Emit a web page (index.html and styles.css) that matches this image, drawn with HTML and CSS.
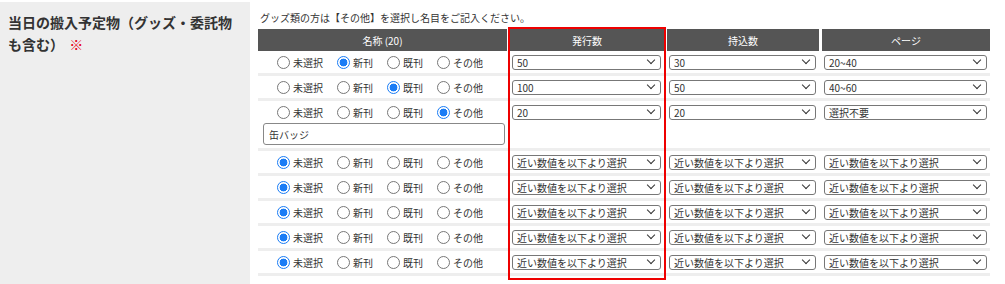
FILE: index.html
```html
<!DOCTYPE html>
<html lang="ja">
<head>
<meta charset="utf-8">
<title>当日の搬入予定物</title>
<link rel="stylesheet" href="styles.css">
</head>
<body>
<div class="form-row">
  <div class="label-cell">
    <h2 class="field-title">当日の搬入予定物（グッズ・委託物も含む） <span class="req">※</span></h2>
  </div>
  <div class="field-cell">
    <p class="note">グッズ類の方は【その他】を選択し名目をご記入ください。</p>
    <div class="table-wrap">
      <table class="items">
        <colgroup>
          <col class="c-name"><col class="c-issue"><col class="c-bring"><col class="c-page">
        </colgroup>
        <thead>
          <tr><th>名称 (20)</th><th>発行数</th><th>持込数</th><th>ページ</th></tr>
        </thead>
        <tbody>
          <tr>
            <td class="name">
              <div class="radios">
                <label><input type="radio" name="k1">未選択</label>
                <label><input type="radio" name="k1" checked>新刊</label>
                <label><input type="radio" name="k1">既刊</label>
                <label><input type="radio" name="k1">その他</label>
              </div>
            </td>
            <td><span class="sel"><select><option>50</option></select></span></td>
            <td><span class="sel"><select><option>30</option></select></span></td>
            <td><span class="sel"><select><option>20~40</option></select></span></td>
          </tr>
          <tr>
            <td class="name">
              <div class="radios">
                <label><input type="radio" name="k2">未選択</label>
                <label><input type="radio" name="k2">新刊</label>
                <label><input type="radio" name="k2" checked>既刊</label>
                <label><input type="radio" name="k2">その他</label>
              </div>
            </td>
            <td><span class="sel"><select><option>100</option></select></span></td>
            <td><span class="sel"><select><option>50</option></select></span></td>
            <td><span class="sel"><select><option>40~60</option></select></span></td>
          </tr>
          <tr>
            <td class="name">
              <div class="radios">
                <label><input type="radio" name="k3">未選択</label>
                <label><input type="radio" name="k3">新刊</label>
                <label><input type="radio" name="k3">既刊</label>
                <label><input type="radio" name="k3" checked>その他</label>
              </div>
              <input class="other" type="text" value="缶バッジ">
            </td>
            <td><span class="sel"><select><option>20</option></select></span></td>
            <td><span class="sel"><select><option>20</option></select></span></td>
            <td><span class="sel"><select><option>選択不要</option></select></span></td>
          </tr>
          <tr>
            <td class="name">
              <div class="radios">
                <label><input type="radio" name="k4" checked>未選択</label>
                <label><input type="radio" name="k4">新刊</label>
                <label><input type="radio" name="k4">既刊</label>
                <label><input type="radio" name="k4">その他</label>
              </div>
            </td>
            <td><span class="sel"><select><option>近い数値を以下より選択</option></select></span></td>
            <td><span class="sel"><select><option>近い数値を以下より選択</option></select></span></td>
            <td><span class="sel"><select><option>近い数値を以下より選択</option></select></span></td>
          </tr>
          <tr>
            <td class="name">
              <div class="radios">
                <label><input type="radio" name="k5" checked>未選択</label>
                <label><input type="radio" name="k5">新刊</label>
                <label><input type="radio" name="k5">既刊</label>
                <label><input type="radio" name="k5">その他</label>
              </div>
            </td>
            <td><span class="sel"><select><option>近い数値を以下より選択</option></select></span></td>
            <td><span class="sel"><select><option>近い数値を以下より選択</option></select></span></td>
            <td><span class="sel"><select><option>近い数値を以下より選択</option></select></span></td>
          </tr>
          <tr>
            <td class="name">
              <div class="radios">
                <label><input type="radio" name="k6" checked>未選択</label>
                <label><input type="radio" name="k6">新刊</label>
                <label><input type="radio" name="k6">既刊</label>
                <label><input type="radio" name="k6">その他</label>
              </div>
            </td>
            <td><span class="sel"><select><option>近い数値を以下より選択</option></select></span></td>
            <td><span class="sel"><select><option>近い数値を以下より選択</option></select></span></td>
            <td><span class="sel"><select><option>近い数値を以下より選択</option></select></span></td>
          </tr>
          <tr>
            <td class="name">
              <div class="radios">
                <label><input type="radio" name="k7" checked>未選択</label>
                <label><input type="radio" name="k7">新刊</label>
                <label><input type="radio" name="k7">既刊</label>
                <label><input type="radio" name="k7">その他</label>
              </div>
            </td>
            <td><span class="sel"><select><option>近い数値を以下より選択</option></select></span></td>
            <td><span class="sel"><select><option>近い数値を以下より選択</option></select></span></td>
            <td><span class="sel"><select><option>近い数値を以下より選択</option></select></span></td>
          </tr>
          <tr>
            <td class="name">
              <div class="radios">
                <label><input type="radio" name="k8" checked>未選択</label>
                <label><input type="radio" name="k8">新刊</label>
                <label><input type="radio" name="k8">既刊</label>
                <label><input type="radio" name="k8">その他</label>
              </div>
            </td>
            <td><span class="sel"><select><option>近い数値を以下より選択</option></select></span></td>
            <td><span class="sel"><select><option>近い数値を以下より選択</option></select></span></td>
            <td><span class="sel"><select><option>近い数値を以下より選択</option></select></span></td>
          </tr>
        </tbody>
      </table>
      <div class="highlight"></div>
    </div>
  </div>
</div>
</body>
</html>
```

FILE: styles.css
```css
* { box-sizing: border-box; }
html, body { margin: 0; padding: 0; background: #fff; }
body {
  font-family: "Noto Sans CJK JP", "Noto Sans", sans-serif;
  color: #333;
  font-size: 10px;
}
.form-row {
  display: flex;
  align-items: stretch;
  min-height: 284px;
  padding-top: 2px;
}
.label-cell {
  width: 250px;
  flex: none;
  background: #eeeeee;
  padding: 9px 8px;
}
.field-title {
  margin: 0;
  font-size: 14px;
  line-height: 22px;
  font-weight: bold;
  color: #333;
}
.req {
  color: #e60012;
  margin-left: 2px;
  font-weight: normal;
}
.field-cell {
  flex: 1;
  padding: 8px 15px 0 8px;
}
.note {
  margin: 0 0 4px 2px;
  font-size: 10px;
  line-height: 15px;
}
.table-wrap {
  position: relative;
  width: 732px;
}
.items {
  width: 732px;
  border-collapse: separate;
  border-spacing: 0;
  table-layout: fixed;
}
.c-name { width: 249px; }
.c-issue { width: 157px; }
.c-bring { width: 155px; }
.c-page { width: 171px; }
.items th {
  background: #555;
  color: #fff;
  font-weight: normal;
  font-size: 10px;
  height: 22px;
  padding: 0;
  text-align: center;
  background-clip: padding-box;
}
.items th + th { border-left: 3px solid #fff; }
.items td {
  padding: 4px 3px 0 5px;
  vertical-align: top;
  border-bottom: 3px solid #eeeeee;
}
.items td.name { padding: 0 2px 0 5px; }
.radios {
  display: flex;
  justify-content: center;
  gap: 14px;
  height: 22px;
  align-items: center;
  padding-right: 8px;
}
.radios label {
  display: flex;
  align-items: center;
  gap: 3px;
  font-size: 10px;
  white-space: nowrap;
}
.radios input {
  appearance: none;
  -webkit-appearance: none;
  margin: 0;
  width: 13px;
  height: 13px;
  border: 1px solid #777;
  border-radius: 50%;
  background: #fff;
}
.radios input:checked {
  border: 1.5px solid #1a7cf5;
  background: radial-gradient(circle, #1a7cf5 0 3.6px, #fff 4.2px);
}
.other {
  display: block;
  width: 242px;
  height: 22px;
  margin: 0 0 3px;
  border: 1px solid #888;
  border-radius: 3px;
  padding: 0 5px;
  font-family: inherit;
  font-size: 10px;
  color: #333;
}
.sel {
  position: relative;
  display: block;
}
.sel select {
  appearance: none;
  -webkit-appearance: none;
  display: block;
  width: 100%;
  height: 15px;
  margin: 0;
  padding: 0 16px 0 4px;
  border: 1px solid #777;
  border-radius: 3px;
  background: #fff;
  font-family: inherit;
  font-size: 10px;
  line-height: 13px;
  color: #333;
}
.sel::after {
  content: "";
  position: absolute;
  right: 7px;
  top: 2px;
  width: 5px;
  height: 5px;
  border-right: 1px solid #333;
  border-bottom: 1px solid #333;
  transform: rotate(45deg);
  pointer-events: none;
}
.highlight {
  position: absolute;
  left: 250px;
  top: -2px;
  width: 158px;
  height: 253px;
  border: 2px solid #ee0000;
  pointer-events: none;
}
```
